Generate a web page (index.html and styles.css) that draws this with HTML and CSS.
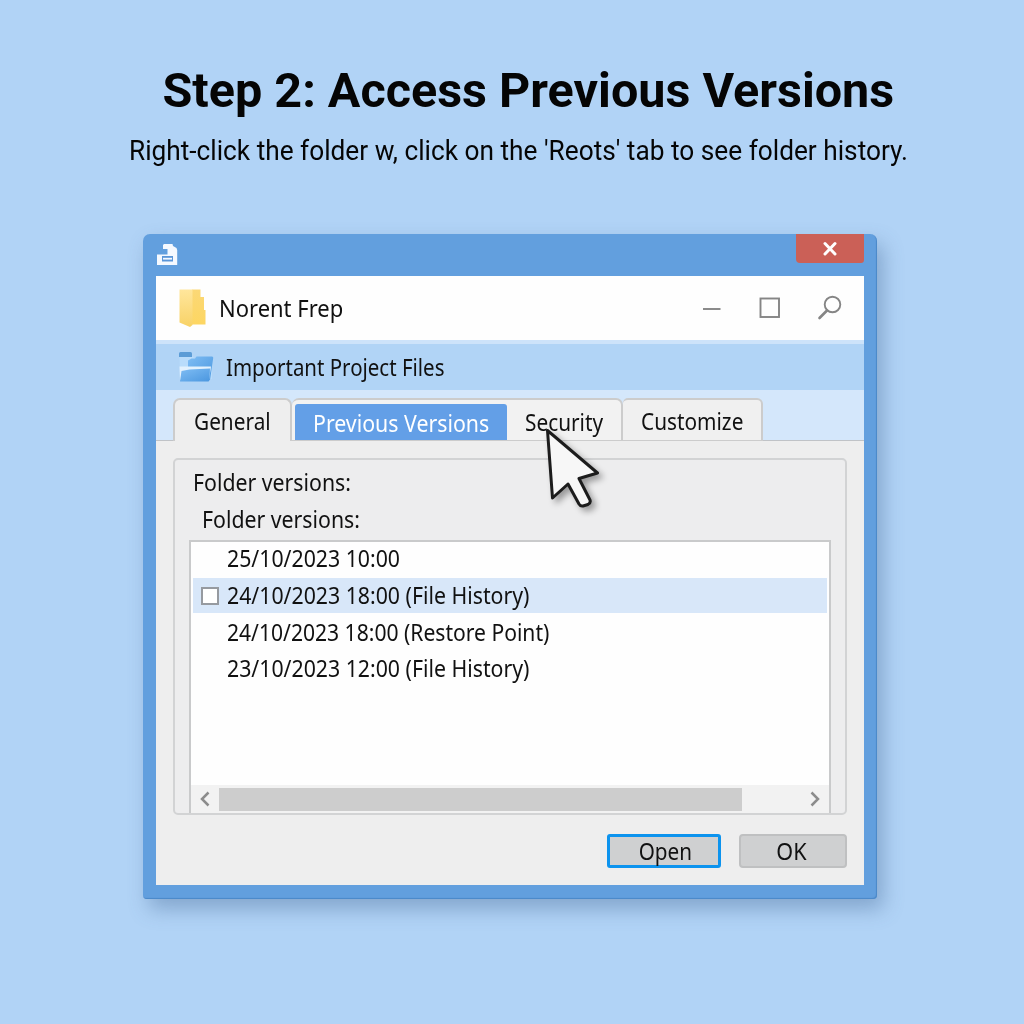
FILE: index.html
```html
<!DOCTYPE html>
<html lang="en">
<head>
<meta charset="utf-8">
<title>Step 2: Access Previous Versions</title>
<link rel="stylesheet" href="styles.css">
</head>
<body>
<header class="intro">
  <h1 class="intro-title">Step 2: Access Previous Versions</h1>
  <p class="intro-text"><span class="t">Right-click the folder w, click on the 'Reots' tab to see folder history.</span></p>
</header>
<main class="window">
  <div class="titlebar">
    <svg class="app-icon" width="21" height="22" viewBox="0 0 21 22"><path d="M6 1 7 0h8.500L16 2l3.500 2 .7 2v15H0V10.500h10.500V5H6z" fill="#f5f9ff"/><path d="M5 12h11v5.500H5z" fill="#5b96d8"/><path d="M6 14.700h9" stroke="#f5f9ff" stroke-width="1.800"/></svg>
    <button class="close" aria-label="Close"><svg width="16" height="16" viewBox="0 0 16 16"><path d="M3 2.500 13 13M13 2.500 3 13" stroke="#fff" stroke-width="3" stroke-linecap="round"/></svg></button>
  </div>
  <div class="frame">
    <div class="caption">
      <svg class="folder-yellow" width="27" height="39" viewBox="0 0 27 39"><defs><linearGradient id="ya" x2="0" y2="1"><stop offset="0" stop-color="#ffe69c"/><stop offset="1" stop-color="#f8d266"/></linearGradient><linearGradient id="yb" x2="0" y2="1"><stop offset="0" stop-color="#fbd876"/><stop offset="1" stop-color="#fdd662"/></linearGradient></defs><path d="M13 .5h8.500V8H25v13h1.500v14.500H13z" fill="url(#yb)"/><path d="M.5.5H13.500v35.500l-2.500 2L.5 33.500z" fill="url(#ya)"/></svg>
      <span class="caption-text"><span class="t">Norent Frep</span></span>
      <svg class="caption-controls" width="140" height="26" viewBox="0 0 140 26" fill="none" stroke="#858585" stroke-width="1.900"><path d="M0 15h17.500"/><rect x="57.500" y="4.500" width="18.500" height="18.500"/><circle cx="129.500" cy="10.500" r="7.800"/><path d="M124 16.500 116.500 24" stroke-width="2.600" stroke-linecap="round"/></svg>
    </div>
    <div class="path-row">
      <svg class="folder-blue" width="35" height="31" viewBox="0 0 35 31"><defs><linearGradient id="ba" x2="1" y2="1"><stop offset="0" stop-color="#7fbdf4"/><stop offset="1" stop-color="#4b97df"/></linearGradient></defs><path d="M.5 4H13l2 2h18v21H1z" fill="#b9dcfb"/><path d="M0 1.500Q0 0 1.500 0h10q1.500 0 1.500 1.500V5H0z" fill="#5c9cd6"/><path d="M9 14.500V8.500L12.500 6.500H16l1.500-2H33q1.500 0 1.200 1.500L31 28H9z" fill="url(#ba)"/><path d="M8.500 6v9M.5 14.500H32L30 28H1z" fill="#e2f1fe"/><path d="M2.500 19l8-1.500 20.500-1L30.500 28q-.3 1.500-1.500 1.500H1z" fill="url(#ba)"/></svg>
      <span class="path-text"><span class="t">Important Project Files</span></span>
    </div>
    <div class="tabs">
      <div class="tab tab-general"><span class="t">General</span></div>
      <div class="tab-group">
        <div class="tab tab-previous"><span class="t">Previous Versions</span></div>
        <div class="tab tab-security"><span class="t">Security</span></div>
      </div>
      <div class="tab tab-customize"><span class="t">Customize</span></div>
      <div class="tab-rest"></div>
    </div>
    <div class="panel">
      <section class="group">
        <div class="label"><span class="t">Folder versions:</span></div>
        <div class="label label-inner"><span class="t">Folder versions:</span></div>
        <div class="list">
          <div class="row row-first"><span class="t">25/10/2023 10:00</span></div>
          <div class="row row-selected"><i class="check"></i><span class="t">24/10/2023 18:00 (File History)</span></div>
          <div class="row row-restore"><span class="t">24/10/2023 18:00 (Restore Point)</span></div>
          <div class="row row-last"><span class="t">23/10/2023 12:00 (File History)</span></div>
          <div class="scrollbar">
            <svg width="28" height="26" viewBox="0 0 28 26"><path d="M17.500 6.500 11 13l6.500 6.500" fill="none" stroke="#8c8c8c" stroke-width="2.500"/></svg>
            <div class="thumb"></div>
            <svg class="arrow-right" width="28" height="26" viewBox="0 0 28 26"><path d="M10.500 6.500 17 13l-6.500 6.500" fill="none" stroke="#8c8c8c" stroke-width="2.500"/></svg>
          </div>
        </div>
      </section>
      <div class="actions">
        <button class="btn btn-open"><span class="t">Open</span></button>
        <button class="btn btn-ok"><span class="t">OK</span></button>
      </div>
    </div>
  </div>
  <svg class="cursor" width="70" height="90" viewBox="0 0 70 90"><path d="M6.500 6.500 56.500 49 38 54.500 49 76Q50 79 47 80.500L42 82Q39.500 82.500 38 80L27 60 11.500 74z" fill="#f7f7f7" stroke="#1c1c1c" stroke-width="3" stroke-linejoin="round"/></svg>
</main>
</body>
</html>
```
FILE: styles.css
```css
* { box-sizing: border-box; }
body {
  margin: 0;
  width: 1024px;
  height: 1024px;
  overflow: hidden;
  background: #b1d3f6;
  color: #111;
  font-family: "Noto Sans", "Open Sans", sans-serif;
  font-size: 23.5px;
}
/* Condenses the UI face horizontally; --sx is the width factor. */
.t { display: inline-block; white-space: pre; transform: scaleX(var(--sx, .905)); transform-origin: 0 50%; }
.intro { height: 234px; padding-top: 61px; font-family: Roboto, sans-serif; color: #050505; }
.intro-title { margin: 0; padding-left: 162.5px; font-size: 48.5px; line-height: 60px; font-weight: 700; white-space: pre; }
.intro-text { --sx: .972; margin: 10px 0 0; padding-left: 128.5px; font-size: 27px; line-height: 40px; }
.window {
  position: relative;
  width: 734px;
  height: 665px;
  margin-left: 143px;
  padding: 0 13px 14px;
  background: #629fde;
  border-radius: 7px 7px 4px 4px;
  box-shadow: inset -1px -1px 1px #4b88c8, 6px 10px 20px rgba(70, 105, 150, .42);
}
.titlebar { height: 42px; display: flex; justify-content: space-between; }
.app-icon { margin: 10px 0 0 1px; }
.close { width: 68px; height: 29px; padding: 0; border: 0; border-radius: 0 0 3px 4px; background: #cb6057; display: flex; align-items: center; justify-content: center; }
.frame { height: 609px; display: flex; flex-direction: column; background: #eee; }
.caption { --sx: .935; height: 64px; padding: 0 21px 0 23px; display: flex; align-items: center; background: #fefefe; }
.caption-text { flex: 1; margin-left: 13px; padding-bottom: 1px; }
.caption-controls { margin-bottom: 2px; }
.path-row { --sx: .871; height: 50px; padding-left: 23px; display: flex; align-items: center; border-top: 4px solid #cde3fa; background: #b1d4f6; }
.path-text { margin-left: 12px; }
.tabs { height: 51px; padding-top: 8px; display: flex; background: #d4e7fb; }
.tabs::before { content: ""; width: 17px; border-bottom: 1px solid #c0c3c7; }
.tab { --sx: .885; height: 43px; line-height: 43px; }
.tab-general { width: 119px; padding-left: 19px; border: 2px solid #ccc; border-bottom: 0; border-radius: 7px 7px 0 0; background: #eee; }
.tab-group { width: 331px; display: flex; align-items: flex-end; border: 2px solid #ccc; border-bottom-width: 1px; border-left: 0; border-radius: 7px 7px 0 0; background: #f2f2f2; }
.tab-previous { width: 212px; height: 36px; --sx: .907; margin-left: 3px; padding-left: 18px; line-height: 38px; border-radius: 3px 3px 0 0; background: #639fe7; color: #fff; }
.tab-security { height: 38px; padding-left: 18px; line-height: 40px; }
.tab-customize { width: 140px; padding-left: 18px; border: 2px solid #ccc; border-bottom-width: 1px; border-left: 0; border-radius: 5px 6px 0 0; background: #f0f0f0; }
.tab-rest { flex: 1; border-bottom: 1px solid #c0c3c7; }
.panel { flex: 1; padding: 17px 17px 0; display: flex; flex-direction: column; }
.group { height: 357px; padding: 6px 14px 0 14px; border: 2px solid #d2d3d4; border-radius: 5px; background: #ededee; display: flex; flex-direction: column; }
.label { height: 37px; padding-left: 4px; line-height: 33px; }
.label-inner { padding-left: 13px; }
.list { flex: 1; display: flex; flex-direction: column; padding: 0 2px; border: 2px solid #c9cacb; border-bottom: 0; background: #fefefe; }
.row { height: 36px; padding-left: 34px; line-height: 35px; }
.row-first { line-height: 33px; }
.row-restore { --sx: .897; line-height: 33px; }
.row-last { line-height: 33px; }
.row-selected { position: relative; height: 35px; margin-bottom: 3px; background: #d8e7f9; }
.check { position: absolute; left: 8px; top: 9px; width: 18px; height: 18px; border: 2px solid #969aa0; background: #fff; }
.scrollbar { height: 28px; margin: auto -2px 0; display: flex; align-items: center; background: #f2f2f2; }
.thumb { width: 523px; height: 23px; background: #cdcdcd; }
.arrow-right { margin-left: auto; }
.actions { --sx: .88; margin-top: 19px; display: flex; justify-content: flex-end; gap: 18px; }
.btn { height: 34px; padding: 0; font: inherit; line-height: 28px; color: #111; background: #cfd0d1; }
.btn .t { position: relative; transform-origin: 50% 50%; }
.btn-open { width: 114px; border: 3px solid #0c93ee; border-radius: 3px; }
.btn-open .t { left: 1px; }
.btn-ok { width: 108px; --sx: .92; border: 2px solid #bfc0c1; border-radius: 4px; }
.btn-ok .t { left: -1.5px; }
.cursor { position: absolute; left: 398px; top: 190px; filter: drop-shadow(4px 4px 3px rgba(0, 0, 0, .35)); }
```
